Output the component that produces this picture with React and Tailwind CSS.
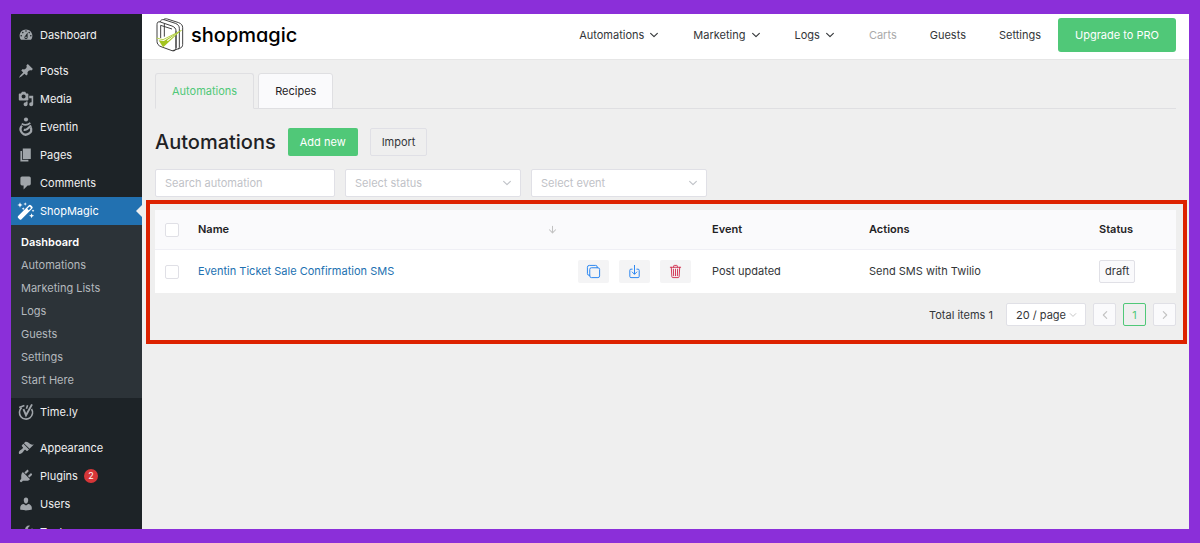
import React, { useState } from 'react';
import {
  IoArrowDown,
  IoChevronBack,
  IoChevronDown,
  IoChevronForward,
  IoCopyOutline,
  IoDownloadOutline,
  IoTrashOutline,
} from 'react-icons/io5';

const ICON_PATHS = {
  dashboard:
    'M3.76 16h12.48c1.1-1.37 1.76-3.11 1.76-5 0-4.42-3.58-8-8-8s-8 3.58-8 8c0 1.89.66 3.63 1.76 5zM10 4c.55 0 1 .45 1 1s-.45 1-1 1-1-.45-1-1 .45-1 1-1zM6 6c.55 0 1 .45 1 1s-.45 1-1 1-1-.45-1-1 .45-1 1-1zm8 0c.55 0 1 .45 1 1s-.45 1-1 1-1-.45-1-1 .45-1 1-1zm-5.37 5.55L12 7v6c0 1.1-.9 2-2 2s-2-.9-2-2c0-.57.24-1.08.63-1.45zM4 10c.55 0 1 .45 1 1s-.45 1-1 1-1-.45-1-1 .45-1 1-1zm12 0c.55 0 1 .45 1 1s-.45 1-1 1-1-.45-1-1 .45-1 1-1zm-5 3c0-.55-.45-1-1-1s-1 .45-1 1 .45 1 1 1 1-.45 1-1z',
  posts:
    'M10.44 3.02l1.82-1.82 6.36 6.35-1.83 1.82c-1.05-.68-2.48-.57-3.41.36l-.75.75c-.92.93-1.04 2.35-.35 3.41l-1.83 1.82-2.41-2.41-2.8 2.79c-.42.42-3.38 2.71-3.8 2.29s1.86-3.39 2.28-3.81l2.79-2.79L4.1 9.36l1.83-1.82c1.05.69 2.48.57 3.4-.36l.75-.75c.93-.92 1.05-2.35.36-3.41z',
  media:
    'M13 11V4c0-.55-.45-1-1-1h-1.67L9 1H5L3.67 3H2c-.55 0-1 .45-1 1v7c0 .55.45 1 1 1h10c.55 0 1-.45 1-1zM7 4.5c1.38 0 2.5 1.12 2.5 2.5S8.38 9.5 7 9.5 4.5 8.38 4.5 7 5.62 4.5 7 4.5zM14 6h5v10.5c0 1.38-1.12 2.5-2.5 2.5S14 17.88 14 16.5s1.12-2.5 2.5-2.5c.17 0 .34.02.5.05V9h-3V6zm-4 8.05V13h2v3.5c0 1.38-1.12 2.5-2.5 2.5S7 17.88 7 16.5 8.12 14 9.5 14c.17 0 .34.02.5.05z',
  pages: 'M6 15V2h10v13H6zm-1 1h8v2H3V5h2v11z',
  comments:
    'M5 2h9c1.1 0 2 .9 2 2v7c0 1.1-.9 2-2 2h-2l-5 5v-5H5c-1.1 0-2-.9-2-2V4c0-1.1.9-2 2-2z',
  appearance:
    'M14.48 11.06L7.41 3.99l1.5-1.5c.5-.56 2.3-.47 3.51.32 1.21.8 1.43 1.28 2.91 2.1 1.18.64 2.45 1.26 4.45.85zm-.71.71L6.7 4.7 4.93 6.47c-.39.39-.39 1.02 0 1.41l1.06 1.06c.39.39.39 1.03 0 1.42-.6.6-1.43 1.11-2.21 1.69-.35.26-.7.53-1.01.84C1.43 14.23.4 16.08 1.4 17.07c.99 1 2.84-.03 4.18-1.36.31-.31.58-.66.85-1.02.57-.78 1.08-1.61 1.69-2.21.39-.39 1.02-.39 1.41 0l1.06 1.06c.39.39 1.02.39 1.41 0z',
  plugins:
    'M13.11 4.36L9.87 7.6 8 5.73l3.24-3.24c.35-.34 1.05-.2 1.56.32.52.51.66 1.21.31 1.55zm-8 1.77l.91-1.12 9.01 9.01-1.19.84c-.71.71-2.63 1.16-3.82 1.16H6.14L4.9 17.26c-.59.59-1.54.59-2.12 0-.59-.58-.59-1.53 0-2.12l1.24-1.24v-3.88c0-1.13.4-3.19 1.09-3.89zm7.26 3.97l3.24-3.24c.34-.35 1.04-.21 1.55.31.52.51.66 1.21.31 1.55l-3.24 3.25z',
  users:
    'M10 9.25c-2.27 0-2.73-3.44-2.73-3.44C7 4.02 7.82 2 9.97 2c2.16 0 2.98 2.02 2.71 3.81 0 0-.41 3.44-2.68 3.44zm0 2.57L12.72 10c2.39 0 4.52 2.33 4.52 4.53v2.49s-3.65 1.13-7.24 1.13c-3.65 0-7.24-1.13-7.24-1.13v-2.49c0-2.25 1.94-4.48 4.47-4.48z',
  tools:
    'M16.68 9.77c-1.34 1.34-3.3 1.67-4.95.99l-5.41 6.52c-.99.99-2.59.99-3.58 0s-.99-2.59 0-3.57l6.52-5.42c-.68-1.65-.35-3.61.99-4.95 1.28-1.28 3.12-1.62 4.72-1.06l-2.89 2.89 2.82 2.82 2.86-2.87c.53 1.58.18 3.39-1.08 4.65z',
};

const SUBMENU = ['Dashboard', 'Automations', 'Marketing Lists', 'Logs', 'Guests', 'Settings', 'Start Here'];

const NAV = [
  { label: 'Automations', menu: true },
  { label: 'Marketing', menu: true },
  { label: 'Logs', menu: true },
  { label: 'Carts', disabled: true },
  { label: 'Guests' },
  { label: 'Settings' },
];

const AUTOMATIONS = [
  {
    id: 1,
    name: 'Eventin Ticket Sale Confirmation SMS',
    event: 'Post updated',
    actions: 'Send SMS with Twilio',
    status: 'draft',
  },
];

function MenuIcon({ name }) {
  if (name === 'eventin') {
    return (
      <svg viewBox="0 0 20 20" className="size-4 shrink-0 overflow-visible" fill="none" stroke="currentColor">
        <circle cx="10" cy="0.6" r="2.6" fill="currentColor" stroke="none" />
        <path d="M5 8.4a6.600 6.600 0 1 0 11 2" strokeWidth="2.800" />
        <path d="M4.600 6c3 1.600 7.600 1.600 10.800-1.200" strokeWidth="2.200" />
        <path d="M7.200 13.600c2.600.6 5-1.200 9.200-5.600" strokeWidth="2.800" />
      </svg>
    );
  }
  if (name === 'timely') {
    return (
      <svg viewBox="0 0 20 20" className="size-4 shrink-0 overflow-visible" fill="none" stroke="currentColor">
        <path d="M4.500 4.600a8.200 8.200 0 1 0 12.400 1.600" strokeWidth="2" />
        <path d="M6.800 6.500l3.200 7.500L17.500.5" strokeWidth="2.400" />
        <path d="M1.500 4.500l6.500-2.700M12 1.500L10.500 6" strokeWidth="2" />
      </svg>
    );
  }
  if (name === 'wand') {
    return (
      <svg viewBox="0 0 20 20" className="size-4 shrink-0 overflow-visible" fill="currentColor">
        <path
          fillRule="evenodd"
          d="M.2 16.200L13.600 2.800a1.800 1.800 0 0 1 2.600 0l1.600 1.600a1.800 1.800 0 0 1 0 2.600L4.400 20.400a1.800 1.800 0 0 1-2.600 0L.2 18.800a1.800 1.800 0 0 1 0-2.600zM11.600 7.200l1.900 1.900 2.800-2.800-1.900-1.900z"
        />
        <path d="M2.500-.8l.9 2.400 2.400.9-2.400.9-.9 2.400-.9-2.400L-.8 2.500l2.400-.9zM9-1l.6 1.600 1.600.6-1.600.6L9 3.400l-.6-1.600-1.600-.6L8.400.6zM6.500 5.400l.5 1.300 1.300.5-1.300.5-.5 1.300L6 7.700l-1.300-.5L6 6.700zM17 12.800l.9 2.300 2.300.9-2.300.9-.9 2.300-.9-2.300-2.300-.9 2.300-.9zM18.800 8l.5 1.200 1.200.5-1.200.5-.5 1.200-.5-1.200-1.200-.5 1.200-.5z" />
      </svg>
    );
  }
  return (
    <svg viewBox="0 0 20 20" className="size-4 shrink-0" fill="currentColor" fillRule="evenodd">
      <path d={ICON_PATHS[name]} />
    </svg>
  );
}

function MenuItem({ icon, label, badge, active }) {
  return (
    <a
      href="#"
      className={`relative flex h-7 items-center gap-[6px] pl-[7px] text-[11px] ${
        active ? 'bg-[#2271b1] text-white' : 'text-[#f0f0f1]'
      }`}
    >
      <span className={active ? 'text-white' : 'text-[#a0a5aa]'}>
        <MenuIcon name={icon} />
      </span>
      {label}
      {badge && (
        <span className="flex size-[14px] items-center justify-center rounded-full bg-[#d63638] text-[9px] text-white">
          {badge}
        </span>
      )}
      {active && (
        <span className="absolute right-0 top-2 border-y-[6px] border-r-[6px] border-y-transparent border-r-[#efefef]" />
      )}
    </a>
  );
}

function Sidebar() {
  return (
    <aside className="w-[131px] shrink-0 bg-[#1d2327] pt-[7px]">
      <nav>
        <MenuItem icon="dashboard" label="Dashboard" />
        <div className="mt-2">
          <MenuItem icon="posts" label="Posts" />
          <MenuItem icon="media" label="Media" />
          <MenuItem icon="eventin" label="Eventin" />
          <MenuItem icon="pages" label="Pages" />
          <MenuItem icon="comments" label="Comments" />
          <MenuItem icon="wand" label="ShopMagic" active />
        </div>
        <ul className="bg-[#2c3338] py-[6px]">
          {SUBMENU.map((item, i) => (
            <li key={item}>
              <a
                href="#"
                className={`flex h-[23px] items-center pl-[10px] text-[11px] ${
                  i === 0 ? 'font-semibold text-white' : 'text-[#b4b9be]'
                }`}
              >
                {item}
              </a>
            </li>
          ))}
        </ul>
        <MenuItem icon="timely" label="Time.ly" />
        <div className="mt-2">
          <MenuItem icon="appearance" label="Appearance" />
          <MenuItem icon="plugins" label="Plugins" badge={2} />
          <MenuItem icon="users" label="Users" />
          <MenuItem icon="tools" label="Tools" />
        </div>
      </nav>
    </aside>
  );
}

function Logo() {
  return (
    <a href="#" className="flex items-center gap-[7px] text-black">
      <svg viewBox="0 0 84 102" className="h-[34px] w-7" fill="none" stroke="#333" strokeWidth="2.800">
        <path d="M3 20c0-7 3-10 10-8l35 12c8 3 12 8 12 15v50c0 8-4 11-12 9L15 86C7 83 3 77 3 70z" />
        <path d="M24 4c2-2 6-2 10-1l34 11c8 3 12 8 12 15v50c0 7-3 10-9 12L50 98" />
        <path d="M12 12c2-6 6-8 12-7l34 11c8 3 12 8 12 15v56c0 3-1 5-4 6" />
        <path d="M14 60V22M25 56V17M14 22l34 11M60 40v50" />
        <path d="M1 59l21 5 55-28-48 28-4 5 10 8-14 11-6-16z" fill="#fff" stroke="none" />
        <path d="M1 60l20 5L77 37" stroke="#a4c520" strokeWidth="2.400" />
        <path d="M8 67l16 2 5-4 47-28-48 45-7 6z" fill="#a4c520" stroke="none" />
        <path d="M33 67l32-22-30 25z" fill="#fff" stroke="none" />
      </svg>
      <span className="font-['Inter',sans-serif] text-xl font-medium leading-7 [font-feature-settings:'cv11']">
        shopmagic
      </span>
    </a>
  );
}

function Header() {
  return (
    <header className="flex h-[46px] items-start justify-between border-b border-[#e6e6e6] bg-white pl-[14px] pr-[13px] pt-1">
      <Logo />
      <nav className="flex items-center gap-px">
        {NAV.map(({ label, menu, disabled }) => (
          <a
            key={label}
            href="#"
            className={`flex items-center gap-1 px-4 text-[11px] ${disabled ? 'text-[#aaa]' : 'text-[#333639]'}`}
          >
            {label}
            {menu && <IoChevronDown className="size-3" />}
          </a>
        ))}
        <button type="button" className="h-[34px] rounded-[3px] bg-[#50c878] px-[17px] text-[11px] text-white">
          Upgrade to PRO
        </button>
      </nav>
    </header>
  );
}

function Tabs({ active, onChange }) {
  return (
    <div role="tablist" className="flex gap-1 border-b border-[#dfdfe2]">
      {['Automations', 'Recipes'].map((tab) => (
        <button
          key={tab}
          type="button"
          role="tab"
          aria-selected={active === tab}
          onClick={() => onChange(tab)}
          className={`-mb-px h-9 rounded-t-[3px] border px-4 text-[11px] ${
            active === tab
              ? 'border-[#dfdfe2] border-b-[#efefef] bg-[#efefef] text-[#50c878]'
              : 'border-[#dfdfe2] bg-[#fafafc] text-[#1f2225]'
          }`}
        >
          {tab}
        </button>
      ))}
    </div>
  );
}

function FilterSelect({ label }) {
  return (
    <div className="relative">
      <select
        aria-label={label}
        defaultValue=""
        className="h-7 w-44 appearance-none rounded-[2px] border border-[#e0e0e6] bg-white px-[9px] text-[11px] text-[#bfc2c7]"
      >
        <option value="">{label}</option>
      </select>
      <IoChevronDown className="pointer-events-none absolute right-2 top-2 size-3 text-[#bfc2c7]" />
    </div>
  );
}

function Checkbox({ label }) {
  return (
    <input
      type="checkbox"
      aria-label={label}
      className="block size-[14px] appearance-none rounded-[2px] border border-[#e0e0e6] bg-white checked:bg-[#50c878]"
    />
  );
}

function RowButton({ label, className, children }) {
  return (
    <button
      type="button"
      aria-label={label}
      className={`flex h-[23px] w-[31px] items-center justify-center rounded-[2px] bg-[#f4f4f5] ${className}`}
    >
      {children}
    </button>
  );
}

function AutomationsTable() {
  return (
    <table className="w-full table-fixed text-left text-[11px] text-[#333639]">
      <colgroup>
        <col className="w-[33px]" />
        <col />
        <col className="w-[134px]" />
        <col className="w-[157px]" />
        <col className="w-[230px]" />
        <col className="w-[87px]" />
      </colgroup>
      <thead>
        <tr className="h-[39px] border-b border-[#efeff5] bg-[#fafafc] text-[#1f2225]">
          <th className="pl-[10px]">
            <Checkbox label="Select all" />
          </th>
          <th className="px-[10px] font-semibold">
            <span className="flex items-center justify-between">
              Name
              <IoArrowDown className="size-[11px] text-[#c2c2c2]" />
            </span>
          </th>
          <th />
          <th className="px-[10px] font-semibold">Event</th>
          <th className="px-[10px] font-semibold">Actions</th>
          <th className="px-[10px] font-semibold">Status</th>
        </tr>
      </thead>
      <tbody>
        {AUTOMATIONS.map((row) => (
          <tr key={row.id} className="h-11 bg-white">
            <td className="pl-[10px]">
              <Checkbox label={`Select ${row.name}`} />
            </td>
            <td className="px-[10px]">
              <a href="#" className="text-[#2271b1]">{row.name}</a>
            </td>
            <td className="px-[10px]">
              <div className="flex gap-[10px]">
                <RowButton label="Duplicate" className="text-[#2080f0]">
                  <IoCopyOutline className="size-[15px]" />
                </RowButton>
                <RowButton label="Export" className="text-[#2080f0]">
                  <IoDownloadOutline className="size-[15px]" />
                </RowButton>
                <RowButton label="Delete" className="text-[#d03050]">
                  <IoTrashOutline className="size-[15px]" />
                </RowButton>
              </div>
            </td>
            <td className="px-[10px]">{row.event}</td>
            <td className="px-[10px]">{row.actions}</td>
            <td className="px-[10px]">
              <span className="inline-flex h-[23px] items-center rounded-[2px] border border-[#e0e0e6] bg-[#fafafc] px-[5px]">
                {row.status}
              </span>
            </td>
          </tr>
        ))}
      </tbody>
    </table>
  );
}

function Pagination() {
  return (
    <div className="mt-[10px] flex items-center justify-end gap-[7px] text-[11px] text-[#333639]">
      <span className="mr-[6px]">Total items 1</span>
      <div className="relative">
        <select
          aria-label="Items per page"
          className="block h-[23px] w-20 appearance-none rounded-[2px] border border-[#e0e0e6] bg-white pl-[9px]"
        >
          <option>20 / page</option>
        </select>
        <IoChevronDown className="pointer-events-none absolute right-2 top-[7px] size-[10px] text-[#c2c2c2]" />
      </div>
      <button
        type="button"
        aria-label="Previous page"
        className="flex size-[23px] items-center justify-center rounded-[2px] border border-[#e0e0e6] bg-[#fafafc] text-[#c2c2c2]"
      >
        <IoChevronBack className="size-3" />
      </button>
      <button
        type="button"
        className="flex size-[23px] items-center justify-center rounded-[2px] border border-[#50c878] text-[#50c878]"
      >
        1
      </button>
      <button
        type="button"
        aria-label="Next page"
        className="flex size-[23px] items-center justify-center rounded-[2px] border border-[#e0e0e6] bg-[#fafafc] text-[#c2c2c2]"
      >
        <IoChevronForward className="size-3" />
      </button>
    </div>
  );
}

export default function App() {
  const [tab, setTab] = useState('Automations');
  const [search, setSearch] = useState('');

  return (
    <div className="h-screen bg-[#8b2fd9] px-[11px] py-[14px] font-['Inter',sans-serif]">
      <div className="flex h-full overflow-hidden bg-[#efefef]">
        <Sidebar />
        <div className="min-w-0 flex-1">
          <Header />
          <main className="px-[13px] pt-[13px]">
            <Tabs active={tab} onChange={setTab} />

            <div className="mt-[19px] flex items-center gap-3">
              <h1 className="text-xl font-medium leading-7 text-[#1f2225]">Automations</h1>
              <button type="button" className="h-7 rounded-[2px] bg-[#50c878] px-3 text-[11px] text-white">
                Add new
              </button>
              <button
                type="button"
                className="h-7 rounded-[2px] border border-[#e0e0e6] px-[11px] text-[11px] text-[#333639]"
              >
                Import
              </button>
            </div>

            <div className="mt-[13px] flex gap-[10px]">
              <input
                type="text"
                aria-label="Search automation"
                placeholder="Search automation"
                value={search}
                onChange={(e) => setSearch(e.target.value)}
                className="h-7 w-[180px] rounded-[2px] border border-[#e0e0e6] bg-white px-[9px] text-[11px] text-[#333639] placeholder:text-[#bfc2c7]"
              />
              <FilterSelect label="Select status" />
              <FilterSelect label="Select event" />
            </div>

            <section className="relative mt-[13px]">
              <AutomationsTable />
              <Pagination />
              {/* Highlight frame around the list */}
              <div className="pointer-events-none absolute -bottom-[18px] -left-[9px] -right-[11px] -top-[10px] border-4 border-[#dd2200]" />
            </section>
          </main>
        </div>
      </div>
    </div>
  );
}
